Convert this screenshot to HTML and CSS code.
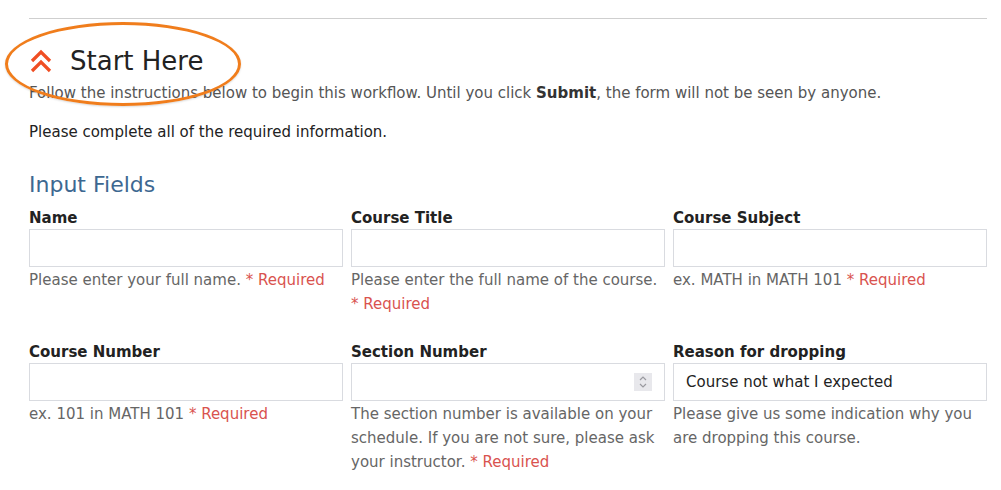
FILE: index.html
```html
<!DOCTYPE html>
<html>
<head>
<meta charset="utf-8">
<link rel="stylesheet" href="styles.css">
</head>
<body>
<div class="page">
  <hr class="rule">
  <div class="section-head">
    <svg class="chev" width="22" height="24" viewBox="0 0 22 24"><path d="M2 12 L11 3 L20 12 M2 22 L11 13 L20 22" fill="none" stroke="#f04e23" stroke-width="3.2"/></svg>
    <h1 class="title">Start Here</h1>
    <div class="ring"></div>
  </div>
  <p class="intro">Follow the instructions below to begin this workflow. Until you click <b>Submit</b>, the form will not be seen by anyone.</p>
  <p class="intro second">Please complete all of the required information.</p>
  <h2 class="group">Input Fields</h2>
  <div class="grid">
    <div class="field">
      <label class="lbl">Name</label>
      <div class="input"></div>
      <div class="help">Please enter your full name. <span class="req">* Required</span></div>
    </div>
    <div class="field">
      <label class="lbl">Course Title</label>
      <div class="input"></div>
      <div class="help">Please enter the full name of the course. <span class="req">* Required</span></div>
    </div>
    <div class="field">
      <label class="lbl">Course Subject</label>
      <div class="input"></div>
      <div class="help">ex. MATH in MATH 101 <span class="req">* Required</span></div>
    </div>
    <div class="field">
      <label class="lbl">Course Number</label>
      <div class="input"></div>
      <div class="help">ex. 101 in MATH 101 <span class="req">* Required</span></div>
    </div>
    <div class="field">
      <label class="lbl">Section Number</label>
      <div class="input number">
        <span class="spin"><svg width="10" height="16" viewBox="0 0 10 16"><path d="M2 6 L5 3 L8 6 M2 10 L5 13 L8 10" fill="none" stroke="#9a9aa0" stroke-width="1.2"/></svg></span>
      </div>
      <div class="help">The section number is available on your schedule. If you are not sure, please ask your instructor. <span class="req">* Required</span></div>
    </div>
    <div class="field">
      <label class="lbl">Reason for dropping</label>
      <div class="input text">Course not what I expected</div>
      <div class="help">Please give us some indication why you are dropping this course.</div>
    </div>
  </div>
</div>
</body>
</html>
```
FILE: styles.css
```css
* { box-sizing: border-box; }
body {
  margin: 0;
  background: #fff;
  font-family: "DejaVu Sans", sans-serif;
  color: #222;
}
.page {
  padding: 18px 14px 0 29px;
}
.rule {
  margin: 0;
  border: 0;
  border-top: 1px solid #cfcfcf;
}
.section-head {
  position: relative;
  display: flex;
  align-items: center;
  gap: 18px;
  margin-top: 27px;
  height: 30px;
  padding-left: 1px;
}
.chev { display: block; }
.title {
  margin: 0;
  font-size: 26px;
  font-weight: normal;
  color: #222;
  line-height: 30px;
}
.ring {
  position: absolute;
  left: -24px;
  top: -24px;
  width: 236px;
  height: 84px;
  border: 3px solid #f07d1c;
  border-radius: 50%;
  box-shadow: 0 1px 2px rgba(0,0,0,0.15);
}
.intro {
  margin: 7px 0 0;
  font-size: 15px;
  line-height: 20px;
  color: #555;
}
.intro b { color: #333; }
.intro.second {
  margin-top: 19px;
  color: #222;
}
.group {
  margin: 30px 0 0;
  font-size: 22px;
  font-weight: normal;
  color: #3d6891;
  line-height: 26px;
}
.grid {
  display: grid;
  grid-template-columns: repeat(3, 314px);
  column-gap: 8px;
  row-gap: 27px;
  margin-top: 11px;
}
.lbl {
  display: block;
  font-size: 15px;
  font-weight: bold;
  color: #222;
  line-height: 18px;
  height: 20px;
}
.input {
  height: 38px;
  border: 1px solid #d9dbe0;
  background: #fff;
}
.input.number {
  display: flex;
  align-items: center;
  justify-content: flex-end;
  padding-right: 12px;
}
.spin {
  display: flex;
  align-items: center;
  justify-content: center;
  width: 18px;
  height: 18px;
  background: #e8e8ec;
}
.input.text {
  display: flex;
  align-items: center;
  padding-left: 12px;
  font-size: 15px;
  color: #222;
}
.help {
  margin-top: 1px;
  font-size: 15px;
  line-height: 24px;
  color: #666;
}
.req { color: #d9534f; }
```
